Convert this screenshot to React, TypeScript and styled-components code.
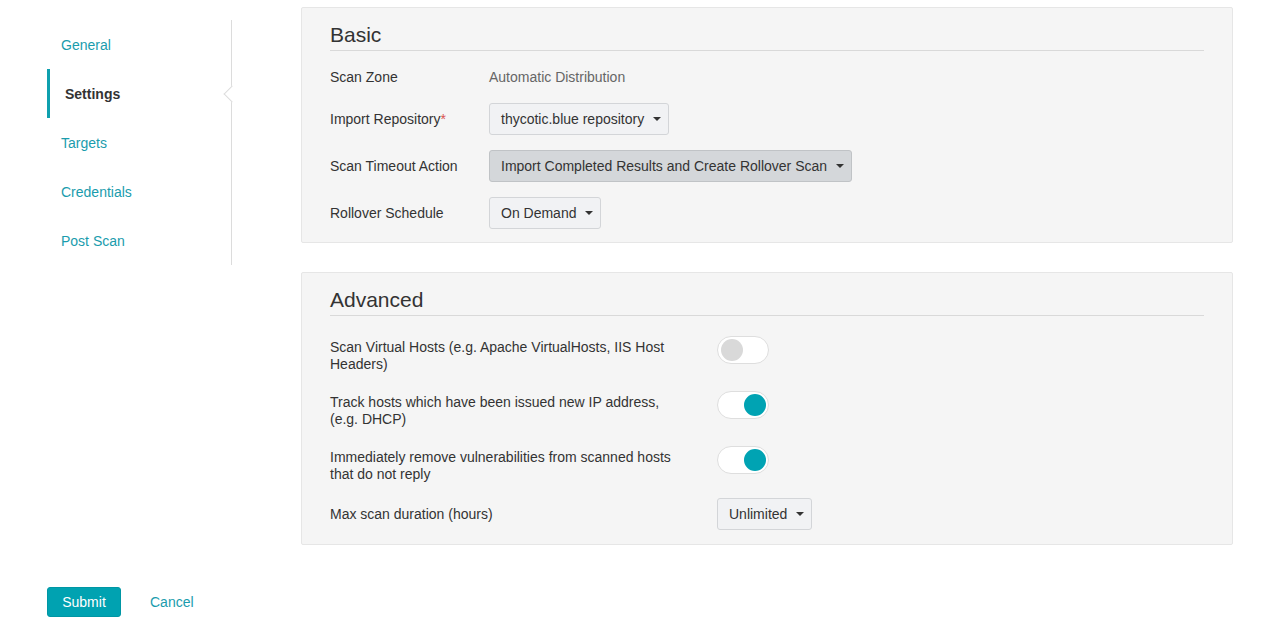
import React, { useState } from "react";
import styled, { createGlobalStyle } from "styled-components";

const GlobalStyle = createGlobalStyle`
  body {
    margin: 0;
    background: #fff;
    font-family: "Liberation Sans", Arial, Helvetica, sans-serif;
    font-size: 14px;
    color: #333;
  }
`;

const Page = styled.div`
  padding: 7px 0 0 47px;
`;

const Layout = styled.div`
  display: flex;
  align-items: flex-start;
`;

const Sidebar = styled.nav`
  width: 184px;
  margin-top: 13px;
  border-right: 1px solid #dcdcdc;
  display: flex;
  flex-direction: column;
`;

const NavItem = styled.a<{ $active?: boolean }>`
  position: relative;
  display: flex;
  align-items: center;
  height: 49px;
  padding-left: ${(p) => (p.$active ? "15px" : "14px")};
  border-left: ${(p) => (p.$active ? "3px solid #0fa0ae" : "none")};
  color: ${(p) => (p.$active ? "#333" : "#1a9cad")};
  font-weight: ${(p) => (p.$active ? "bold" : "normal")};
  text-decoration: none;
  cursor: pointer;

  ${(p) =>
    p.$active &&
    `
    &::after {
      content: "";
      position: absolute;
      right: -7px;
      top: 50%;
      width: 11px;
      height: 11px;
      background: #fff;
      border-left: 1px solid #dcdcdc;
      border-bottom: 1px solid #dcdcdc;
      transform: translateY(-50%) rotate(45deg);
    }
  `}
`;

const Main = styled.main`
  margin-left: 69px;
  width: 932px;
  display: flex;
  flex-direction: column;
  gap: 29px;
`;

const Panel = styled.section`
  background: #f5f5f5;
  border: 1px solid #e6e6e6;
  border-radius: 2px;
  padding: 13px 28px 13px 28px;
`;

const PanelTitle = styled.h2`
  margin: 0;
  padding-bottom: 1px;
  font-size: 21px;
  font-weight: normal;
  line-height: 28px;
  color: #333;
  border-bottom: 1px solid #d9d9d9;
`;

const BasicGrid = styled.div`
  display: grid;
  grid-template-columns: 159px auto;
  grid-template-rows: 24px 32px 32px 32px;
  row-gap: 15px;
  margin-top: 13px;
  align-items: center;
  justify-items: start;
`;

const AdvancedGrid = styled.div`
  display: grid;
  grid-template-columns: 387px auto;
  row-gap: 18px;
  margin-top: 20px;
  padding-bottom: 1px;
  align-items: start;
  justify-items: start;
`;

const Label = styled.span`
  color: #333;
  line-height: 17px;
`;

const WrapLabel = styled(Label)`
  max-width: 350px;
  padding-top: 3px;
`;

const ZoneLabel = styled(Label)`
  padding-top: 2px;
`;

const Required = styled.span`
  color: #d9534f;
`;

const StaticValue = styled.span`
  color: #666;
  padding-top: 2px;
`;

const Select = styled.button<{ $pressed?: boolean }>`
  display: inline-flex;
  align-items: center;
  gap: 9px;
  height: 32px;
  padding: 0 7px 0 11px;
  font-family: inherit;
  font-size: 14px;
  color: #333;
  background: ${(p) => (p.$pressed ? "#d4d7da" : "#f1f2f4")};
  border: 1px solid ${(p) => (p.$pressed ? "#c0c3c6" : "#d3d5d8")};
  border-radius: 3px;
  cursor: pointer;
`;

const Caret = styled.span`
  width: 0;
  height: 0;
  border-left: 4px solid transparent;
  border-right: 4px solid transparent;
  border-top: 4px solid #333;
`;

const LastRow = styled.div`
  display: contents;
  & > * {
    margin-top: -3px;
  }
`;

const LastLabel = styled(Label)`
  align-self: center;
`;

const Track = styled.button<{ $on: boolean }>`
  position: relative;
  width: 52px;
  height: 28px;
  padding: 0;
  border: 1px solid #dedede;
  border-radius: 14px;
  background: #fff;
  cursor: pointer;
`;

const Knob = styled.span<{ $on: boolean }>`
  position: absolute;
  top: 2px;
  left: ${(p) => (p.$on ? "26px" : "3px")};
  width: 22px;
  height: 22px;
  border-radius: 50%;
  background: ${(p) => (p.$on ? "#00a3b3" : "#d9d9d9")};
`;

const Footer = styled.div`
  display: flex;
  align-items: center;
  gap: 29px;
  margin-top: 42px;
`;

const SubmitButton = styled.button`
  width: 74px;
  height: 30px;
  background: #00a2b1;
  color: #fff;
  border: 1px solid #0096a4;
  border-radius: 3px;
  font-family: inherit;
  font-size: 14px;
  cursor: pointer;
`;

const CancelLink = styled.a`
  color: #1a9cad;
  text-decoration: none;
  cursor: pointer;
`;

function Toggle({ initial }: { initial: boolean }) {
  const [on, setOn] = useState(initial);
  return (
    <Track $on={on} onClick={() => setOn(!on)}>
      <Knob $on={on} />
    </Track>
  );
}

function Dropdown({ value, pressed }: { value: string; pressed?: boolean }) {
  return (
    <Select $pressed={pressed}>
      {value}
      <Caret />
    </Select>
  );
}

const navItems = ["General", "Settings", "Targets", "Credentials", "Post Scan"];

export default function App() {
  return (
    <Page>
      <GlobalStyle />
      <Layout>
        <Sidebar>
          {navItems.map((n) => (
            <NavItem key={n} $active={n === "Settings"}>
              {n}
            </NavItem>
          ))}
        </Sidebar>
        <Main>
          <Panel>
            <PanelTitle>Basic</PanelTitle>
            <BasicGrid>
              <ZoneLabel>Scan Zone</ZoneLabel>
              <StaticValue>Automatic Distribution</StaticValue>

              <Label>
                Import Repository<Required>*</Required>
              </Label>
              <Dropdown value="thycotic.blue repository" />

              <Label>Scan Timeout Action</Label>
              <Dropdown value="Import Completed Results and Create Rollover Scan" pressed />

              <Label>Rollover Schedule</Label>
              <Dropdown value="On Demand" />
            </BasicGrid>
          </Panel>
          <Panel>
            <PanelTitle>Advanced</PanelTitle>
            <AdvancedGrid>
              <WrapLabel>Scan Virtual Hosts (e.g. Apache VirtualHosts, IIS Host Headers)</WrapLabel>
              <Toggle initial={false} />

              <WrapLabel>Track hosts which have been issued new IP address, (e.g. DHCP)</WrapLabel>
              <Toggle initial={true} />

              <WrapLabel>Immediately remove vulnerabilities from scanned hosts that do not reply</WrapLabel>
              <Toggle initial={true} />

              <LastRow>
                <LastLabel>Max scan duration (hours)</LastLabel>
                <Dropdown value="Unlimited" />
              </LastRow>
            </AdvancedGrid>
          </Panel>
        </Main>
      </Layout>
      <Footer>
        <SubmitButton>Submit</SubmitButton>
        <CancelLink>Cancel</CancelLink>
      </Footer>
    </Page>
  );
}
